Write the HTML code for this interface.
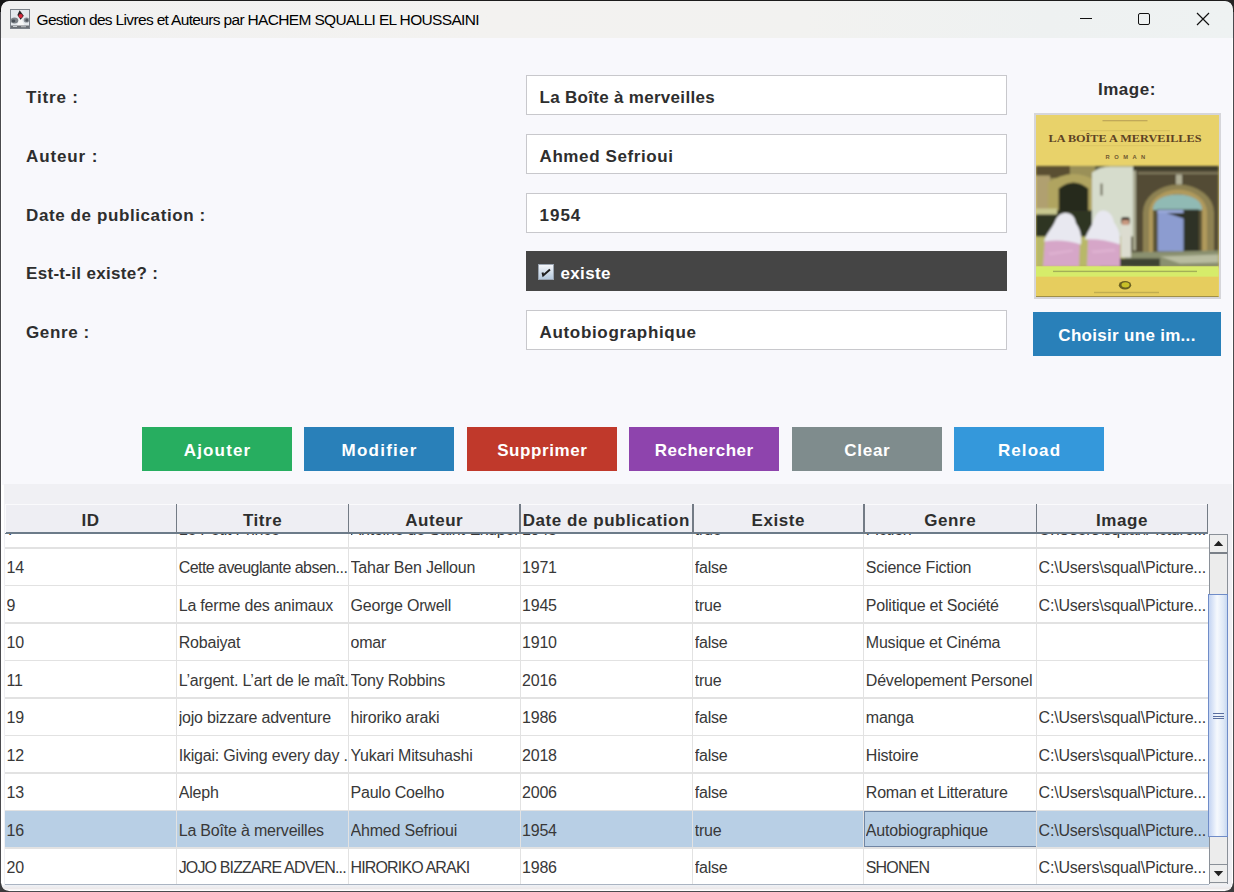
<!DOCTYPE html><html><head><meta charset="utf-8"><style>
*{margin:0;padding:0;box-sizing:border-box}
html,body{width:1234px;height:892px;overflow:hidden;background:#4a4a4e;font-family:"Liberation Sans",sans-serif;position:relative}
div{position:absolute}
#win{left:1px;top:1px;width:1232px;height:890px;background:#fff;border-radius:8px;overflow:hidden}
#content{left:1.4px;top:37px;width:1229.4px;height:447px;background:#f8f8fc}
#title{left:0;top:0;width:1232px;height:37px;background:linear-gradient(90deg,#f1f1f1 0%,#f3f2f0 40%,#f2f2f0 65%,#eef1f1 85%,#eef2f2 100%)}
.ttxt{left:35.5px;top:10px;font-size:15.5px;color:#000;letter-spacing:-0.66px;white-space:nowrap;line-height:17px}
.lbl{left:26px;font-size:17px;font-weight:bold;color:#2e2e2e;letter-spacing:0.6px;white-space:nowrap;line-height:20px}
.fld{left:526px;width:481px;height:40px;background:#fff;border:1px solid #c8c8cc}
.fld div{left:12.5px;top:12px;font-size:17px;font-weight:bold;color:#2e2e2e;letter-spacing:0.3px;white-space:nowrap;line-height:20px}
.btn{top:427px;width:150px;height:44px;color:#fff;font-weight:bold;font-size:17px;text-align:center;line-height:48px;letter-spacing:0.7px;white-space:nowrap}
#tpanel{left:4px;top:484px;width:1227.5px;height:401px;background:#f0f0f4}
.hd{top:504px;height:30px;background:#eeeef3;border-top:1px solid #fafafc;font-size:17px;font-weight:bold;color:#2e2e2e;text-align:center;line-height:31px;letter-spacing:0.55px;white-space:nowrap}
.hdv{top:504px;width:1.5px;height:29px;background:#737b85}
.cell{font-size:16px;color:#383838;white-space:nowrap;line-height:20px;overflow:hidden;letter-spacing:-0.2px}
.gv{width:1px;background:#e2e2e2}
.gh{height:1.5px;background:#e2e2e2}
</style></head><body>
<div style="left:0;top:0;width:12px;height:12px;background:#111"></div>
<div style="left:1222px;top:0;width:12px;height:12px;background:#222"></div>
<div id="win">
<div id="title"><div class="ttxt">Gestion des Livres et Auteurs par HACHEM SQUALLI EL HOUSSAINI</div></div>
<div id="content"></div>
</div>
<div style="left:0;top:0;width:1234px;height:1px;background:#1c1c1c"></div>
<svg style="position:absolute;left:10px;top:9px" width="20" height="20" viewBox="0 0 20 20"><rect x="0.5" y="0.5" width="19" height="19" fill="#e4e8ec" stroke="#7c828a" stroke-width="1"/><ellipse cx="4.5" cy="11.5" rx="3.8" ry="3" fill="#7c8288"/><ellipse cx="3.5" cy="12" rx="1.8" ry="1.4" fill="#4a5058"/><ellipse cx="16.5" cy="11" rx="2.8" ry="2.6" fill="#8a9096"/><ellipse cx="16.8" cy="11.2" rx="1.4" ry="1.6" fill="#50565e"/><path d="M6.5 17.5 L10.5 8 L15 17.5 Z" fill="#f6f6f6"/><path d="M9.6 1.3 L13.8 6.8 L10.6 10.8 L7.4 6 Z" fill="#2c2426"/><circle cx="10.6" cy="7" r="2.1" fill="#d8283c"/><rect x="1" y="16.5" width="18" height="2.5" fill="#6a6e74"/><rect x="3" y="17" width="4" height="1" fill="#c8ccd0"/><rect x="11" y="17.2" width="5" height="1" fill="#b8bcc0"/></svg>
<div style="left:1080px;top:18px;width:12px;height:1.2px;background:#111"></div>
<div style="left:1138px;top:13px;width:12px;height:12px;border:1.2px solid #111;border-radius:2px"></div>
<svg style="position:absolute;left:1196px;top:12px" width="14" height="14" viewBox="0 0 14 14"><path d="M1 1 L13 13 M13 1 L1 13" stroke="#111" stroke-width="1.2"/></svg>
<div class="lbl" style="top:88.00px;letter-spacing:0.83px">Titre :</div>
<div class="fld" style="top:75.00px"><div style="letter-spacing:0.3px">La Boîte à merveilles</div></div>
<div class="lbl" style="top:146.75px;letter-spacing:0.89px">Auteur :</div>
<div class="fld" style="top:133.75px"><div style="letter-spacing:0.6px">Ahmed Sefrioui</div></div>
<div class="lbl" style="top:205.50px;letter-spacing:0.6px">Date de publication :</div>
<div class="fld" style="top:192.50px"><div style="letter-spacing:1.0px">1954</div></div>
<div class="lbl" style="top:264.25px;letter-spacing:0.31px">Est-t-il existe? :</div>
<div style="left:526px;top:251.25px;width:481px;height:40px;background:#454545"></div>
<div style="left:538px;top:264.25px;width:16px;height:16px;background:linear-gradient(#f4f6fa,#b4c8dc);border:1px solid #9aa4b0"></div>
<svg style="position:absolute;left:538px;top:264.25px" width="16" height="16" viewBox="0 0 16 16"><path d="M4.5 8.5 L5.2 11.5 L12 5.5" stroke="#1e1e1e" stroke-width="2" fill="none"/></svg>
<div style="left:560.5px;top:264.25px;font-size:17px;font-weight:bold;color:#fff;letter-spacing:0.35px;line-height:20px">existe</div>
<div class="lbl" style="top:323.00px;letter-spacing:0.62px">Genre :</div>
<div class="fld" style="top:310.00px"><div style="letter-spacing:0.67px">Autobiographique</div></div>
<div style="left:1098px;top:79.5px;font-size:17px;font-weight:bold;color:#2e2e2e;letter-spacing:0.5px;line-height:20px">Image:</div>
<div style="left:1034px;top:112.5px;width:186.5px;height:186.5px;border:2px solid #d6d6da;background:#e8d26a;overflow:hidden"><svg width="182.5" height="182" viewBox="0 0 182.5 182" style="position:absolute;left:0;top:0"><defs><filter id="bl" x="-10%" y="-10%" width="120%" height="120%"><feGaussianBlur stdDeviation="1.1"/></filter><filter id="bl2"><feGaussianBlur stdDeviation="0.5"/></filter></defs><rect x="0" y="0" width="182.5" height="52" fill="#e8d26a"/><rect x="44.0" y="15.5" width="90" height="0.6" fill="#c9b358"/><rect x="44.0" y="30.5" width="90" height="0.6" fill="#d3bd5e"/><rect x="66.5" y="5.0" width="45" height="1.3" fill="#9a8048" opacity="0.5"/><text x="12.5" y="26.8" font-family="Liberation Serif" font-weight="bold" font-size="10.4" fill="#5e4224" textLength="153" lengthAdjust="spacingAndGlyphs">LA BOÎTE A MERVEILLES</text><text x="69.6" y="43.7" font-family="Liberation Sans" font-weight="bold" font-size="5.8" fill="#705830" textLength="39.6" lengthAdjust="spacing">ROMAN</text><g filter="url(#bl)"><rect x="0" y="51.1" width="182.5" height="100.4" fill="#5a5a40"/><rect x="0" y="51.1" width="59.0" height="50" fill="#9a9058"/><rect x="0" y="51.1" width="34.0" height="12" fill="#5a5030"/><rect x="0" y="60.5" width="14" height="35" fill="#b0a070"/><path d="M12.0 100.5 L12.0 67.5 Q37.0 51.5 59.0 65.5 L59.0 100.5 Z" fill="#b0a460"/><path d="M22.7 97.5 L22.7 73.5 Q37.5 61.5 52.3 73.5 L52.3 97.5 Z" fill="#262a1c"/><rect x="0" y="95.5" width="60.0" height="28" fill="#2e3424"/><rect x="0" y="93.5" width="21.0" height="6" fill="#c8c890"/><rect x="0" y="121.5" width="94.0" height="30" fill="#b8b868"/><path d="M56.0 111.5 L56.0 57.5 Q64.0 51.5 74.0 51.5 L97.0 51.5 L97.0 121.5 L56.0 121.5 Z" fill="#d6dccc"/><rect x="64.5" y="68.5" width="2" height="12" fill="#6a6a58"/><rect x="97.0" y="51.1" width="85.5" height="100.4" fill="#524c36"/><rect x="97.0" y="51.1" width="85.5" height="4" fill="#3a3a2c"/><rect x="97.0" y="55.5" width="3" height="80" fill="#a8a890"/><rect x="102.0" y="57.5" width="80" height="1.5" fill="#8a8468"/><path d="M107.0 141.5 L107.0 97.5 A35.5 28 0 0 1 178.0 97.5 L178.0 141.5 Z" fill="#8e8252"/><path d="M113.0 141.5 L113.0 97.5 A29 23 0 0 1 171.0 97.5 L171.0 141.5 Z" fill="#b09a5c"/><path d="M117.0 141.5 L117.0 95.5 A24.5 16 0 0 1 166.0 95.5 L166.0 141.5 Z" fill="#5a5236"/><path d="M117.0 95.0 L117.0 93.5 A24.5 14 0 0 1 166.0 93.5 L166.0 95.0 Z" fill="#90bab4"/><rect x="140.0" y="59.5" width="6" height="10" fill="#c8c8b0" opacity="0.8"/><rect x="121.0" y="94.5" width="42" height="42" fill="#2e3028"/><path d="M121.5 95.0 L147.6 103.5 L147.6 136.5 L121.5 136.5 Z" fill="#8c9cd0"/><rect x="121.5" y="95.0" width="26" height="3" fill="#98a8d8"/><path d="M89.0 137.5 L182.5 135.5 L182.5 151.5 L89.0 151.5 Z" fill="#8a9070"/><path d="M124.0 141.5 L182.5 139.5 L182.5 147.5 L144.0 148.5 Z" fill="#b8bca0"/><rect x="64.0" y="143.5" width="60" height="8" fill="#3e4230"/><path d="M7.0 151.5 L9.0 123.5 Q26.0 117.5 44.0 125.5 L43.0 151.5 Z" fill="#d6a6c8"/><path d="M51.0 151.5 L52.0 123.5 Q68.0 117.5 84.0 125.5 L84.0 151.5 Z" fill="#d6a6c8"/><path d="M8.0 126.5 C10.0 118.5 16.0 113.5 19.0 106.5 C21.0 100.5 25.0 98.0 30.0 98.0 C36.0 98.0 39.0 102.5 40.0 108.5 C44.0 113.5 46.0 120.5 45.0 129.5 Q27.0 123.5 8.0 126.5 Z" fill="#e8e8f0"/><path d="M49.0 124.5 C51.0 116.5 56.0 111.5 58.0 104.5 C60.0 98.5 63.0 95.5 67.0 95.5 C73.0 95.5 77.0 100.5 78.0 107.5 C82.0 112.5 85.0 119.5 84.0 129.5 Q66.0 123.5 49.0 124.5 Z" fill="#e8e8f0"/><path d="M12.0 137.5 L36.0 134.5 L38.0 136.5 L14.0 140.5 Z" fill="#e2b8d6" opacity="0.6"/><path d="M55.0 135.5 L78.0 133.5 L80.0 136.5 L57.0 138.5 Z" fill="#e2b8d6" opacity="0.6"/><rect x="85.0" y="109.5" width="10" height="33" fill="#dcdcd0"/><rect x="85.0" y="102.0" width="9" height="7.5" rx="3" fill="#3a2e28"/><rect x="86.0" y="105.0" width="7" height="5" fill="#c89880"/></g><rect x="0" y="151.3" width="182.5" height="10.5" fill="#d6ec6a"/><rect x="0" y="161.8" width="182.5" height="20.5" fill="#e6cd5e"/><rect x="17.0" y="155.7" width="144" height="1.4" fill="#7a8048" opacity="0.55"/><ellipse cx="89.0" cy="170.3" rx="6.2" ry="4.2" fill="#6a6020"/><ellipse cx="89.5" cy="169.8" rx="4" ry="2.6" fill="#c8c028"/><rect x="58.0" y="176.8" width="65" height="1.4" fill="#a89848" opacity="0.6"/><rect x="0" y="181.5" width="182.5" height="0.8" fill="#5a5030"/></svg></div>
<div class="btn" style="left:1033px;top:312px;width:188px;background:#2980b9;letter-spacing:0.3px">Choisir une im...</div>
<div class="btn" style="left:142px;background:#27ae60;letter-spacing:1.13px;text-indent:1.13px">Ajouter</div>
<div class="btn" style="left:304px;background:#2980b9;letter-spacing:1.24px;text-indent:1.24px">Modifier</div>
<div class="btn" style="left:467px;background:#c0392b;letter-spacing:0.59px;text-indent:0.59px">Supprimer</div>
<div class="btn" style="left:629px;background:#8e44ad;letter-spacing:0.54px;text-indent:0.54px">Rechercher</div>
<div class="btn" style="left:792px;background:#7f8c8d;letter-spacing:0.7px;text-indent:0.7px">Clear</div>
<div class="btn" style="left:954px;background:#3498db;letter-spacing:1.08px;text-indent:1.08px">Reload</div>
<div id="tpanel"></div>
<div style="left:4.5px;top:533px;width:1204px;height:352px;background:#fff"></div>
<div style="left:4.5px;top:533px;width:1204px;height:352px;overflow:hidden">
<div class="cell" style="left:2.0px;top:-12.60px;width:169.7px">7</div>
<div class="cell" style="left:174.2px;top:-12.60px;width:169.3px">Le Petit Prince</div>
<div class="cell" style="left:346.0px;top:-12.60px;width:169.0px">Antoine de Saint-Exupéri</div>
<div class="cell" style="left:517.5px;top:-12.60px;width:170.2px">1943</div>
<div class="cell" style="left:690.2px;top:-12.60px;width:168.6px">true</div>
<div class="cell" style="left:861.3px;top:-12.60px;width:170.3px">Fiction</div>
<div class="cell" style="left:1034.1px;top:-12.60px;width:168.4px">C:\Users\squal\Picture...</div>
<div class="gh" style="left:0;top:14.25px;width:1204px"></div>
<div class="cell" style="left:2.0px;top:25.20px;width:169.7px">14</div>
<div class="cell" style="left:174.2px;top:25.20px;width:169.3px;letter-spacing:-0.55px">Cette aveuglante absen...</div>
<div class="cell" style="left:346.0px;top:25.20px;width:169.0px">Tahar Ben Jelloun</div>
<div class="cell" style="left:517.5px;top:25.20px;width:170.2px">1971</div>
<div class="cell" style="left:690.2px;top:25.20px;width:168.6px">false</div>
<div class="cell" style="left:861.3px;top:25.20px;width:170.3px">Science Fiction</div>
<div class="cell" style="left:1034.1px;top:25.20px;width:168.4px">C:\Users\squal\Picture...</div>
<div class="gh" style="left:0;top:51.75px;width:1204px"></div>
<div class="cell" style="left:2.0px;top:62.70px;width:169.7px">9</div>
<div class="cell" style="left:174.2px;top:62.70px;width:169.3px">La ferme des animaux</div>
<div class="cell" style="left:346.0px;top:62.70px;width:169.0px">George Orwell</div>
<div class="cell" style="left:517.5px;top:62.70px;width:170.2px">1945</div>
<div class="cell" style="left:690.2px;top:62.70px;width:168.6px">true</div>
<div class="cell" style="left:861.3px;top:62.70px;width:170.3px">Politique et Société</div>
<div class="cell" style="left:1034.1px;top:62.70px;width:168.4px">C:\Users\squal\Picture...</div>
<div class="gh" style="left:0;top:89.25px;width:1204px"></div>
<div class="cell" style="left:2.0px;top:100.20px;width:169.7px">10</div>
<div class="cell" style="left:174.2px;top:100.20px;width:169.3px">Robaiyat</div>
<div class="cell" style="left:346.0px;top:100.20px;width:169.0px">omar</div>
<div class="cell" style="left:517.5px;top:100.20px;width:170.2px">1910</div>
<div class="cell" style="left:690.2px;top:100.20px;width:168.6px">false</div>
<div class="cell" style="left:861.3px;top:100.20px;width:170.3px">Musique et Cinéma</div>
<div class="cell" style="left:1034.1px;top:100.20px;width:168.4px"></div>
<div class="gh" style="left:0;top:126.75px;width:1204px"></div>
<div class="cell" style="left:2.0px;top:137.70px;width:169.7px">11</div>
<div class="cell" style="left:174.2px;top:137.70px;width:169.3px">L’argent. L’art de le maît.</div>
<div class="cell" style="left:346.0px;top:137.70px;width:169.0px">Tony Robbins</div>
<div class="cell" style="left:517.5px;top:137.70px;width:170.2px">2016</div>
<div class="cell" style="left:690.2px;top:137.70px;width:168.6px">true</div>
<div class="cell" style="left:861.3px;top:137.70px;width:170.3px">Dévelopement Personel</div>
<div class="cell" style="left:1034.1px;top:137.70px;width:168.4px"></div>
<div class="gh" style="left:0;top:164.25px;width:1204px"></div>
<div class="cell" style="left:2.0px;top:175.20px;width:169.7px">19</div>
<div class="cell" style="left:174.2px;top:175.20px;width:169.3px">jojo bizzare adventure</div>
<div class="cell" style="left:346.0px;top:175.20px;width:169.0px">hiroriko araki</div>
<div class="cell" style="left:517.5px;top:175.20px;width:170.2px">1986</div>
<div class="cell" style="left:690.2px;top:175.20px;width:168.6px">false</div>
<div class="cell" style="left:861.3px;top:175.20px;width:170.3px">manga</div>
<div class="cell" style="left:1034.1px;top:175.20px;width:168.4px">C:\Users\squal\Picture...</div>
<div class="gh" style="left:0;top:201.75px;width:1204px"></div>
<div class="cell" style="left:2.0px;top:212.70px;width:169.7px">12</div>
<div class="cell" style="left:174.2px;top:212.70px;width:169.3px">Ikigai: Giving every day ..</div>
<div class="cell" style="left:346.0px;top:212.70px;width:169.0px">Yukari Mitsuhashi</div>
<div class="cell" style="left:517.5px;top:212.70px;width:170.2px">2018</div>
<div class="cell" style="left:690.2px;top:212.70px;width:168.6px">false</div>
<div class="cell" style="left:861.3px;top:212.70px;width:170.3px">Histoire</div>
<div class="cell" style="left:1034.1px;top:212.70px;width:168.4px">C:\Users\squal\Picture...</div>
<div class="gh" style="left:0;top:239.25px;width:1204px"></div>
<div class="cell" style="left:2.0px;top:250.20px;width:169.7px">13</div>
<div class="cell" style="left:174.2px;top:250.20px;width:169.3px">Aleph</div>
<div class="cell" style="left:346.0px;top:250.20px;width:169.0px">Paulo Coelho</div>
<div class="cell" style="left:517.5px;top:250.20px;width:170.2px">2006</div>
<div class="cell" style="left:690.2px;top:250.20px;width:168.6px">false</div>
<div class="cell" style="left:861.3px;top:250.20px;width:170.3px">Roman et Litterature</div>
<div class="cell" style="left:1034.1px;top:250.20px;width:168.4px">C:\Users\squal\Picture...</div>
<div class="gh" style="left:0;top:276.75px;width:1204px"></div>
<div style="left:0;top:278.00px;width:1204px;height:36.5px;background:#b8cfe5"></div>
<div style="left:859.8px;top:278.30px;width:172.3px;height:35.5px;border:1.2px solid #7086a4"></div>
<div class="cell" style="left:2.0px;top:287.70px;width:169.7px">16</div>
<div class="cell" style="left:174.2px;top:287.70px;width:169.3px">La Boîte à merveilles</div>
<div class="cell" style="left:346.0px;top:287.70px;width:169.0px">Ahmed Sefrioui</div>
<div class="cell" style="left:517.5px;top:287.70px;width:170.2px">1954</div>
<div class="cell" style="left:690.2px;top:287.70px;width:168.6px">true</div>
<div class="cell" style="left:861.3px;top:287.70px;width:170.3px">Autobiographique</div>
<div class="cell" style="left:1034.1px;top:287.70px;width:168.4px">C:\Users\squal\Picture...</div>
<div class="gh" style="left:0;top:314.25px;width:1204px"></div>
<div class="cell" style="left:2.0px;top:325.20px;width:169.7px">20</div>
<div class="cell" style="left:174.2px;top:325.20px;width:169.3px;letter-spacing:-0.85px">JOJO BIZZARE ADVEN...</div>
<div class="cell" style="left:346.0px;top:325.20px;width:169.0px;letter-spacing:-0.85px">HIRORIKO ARAKI</div>
<div class="cell" style="left:517.5px;top:325.20px;width:170.2px">1986</div>
<div class="cell" style="left:690.2px;top:325.20px;width:168.6px">false</div>
<div class="cell" style="left:861.3px;top:325.20px;width:170.3px;letter-spacing:-0.85px">SHONEN</div>
<div class="cell" style="left:1034.1px;top:325.20px;width:168.4px">C:\Users\squal\Picture...</div>
<div class="gh" style="left:0;top:351.75px;width:1204px"></div>
<div class="gv" style="left:171.7px;top:0;height:352px"></div>
<div class="gv" style="left:343.5px;top:0;height:352px"></div>
<div class="gv" style="left:515.0px;top:0;height:352px"></div>
<div class="gv" style="left:687.7px;top:0;height:352px"></div>
<div class="gv" style="left:858.8px;top:0;height:352px"></div>
<div class="gv" style="left:1031.6px;top:0;height:352px"></div>
</div>
<div style="left:4.5px;top:884px;width:1204px;height:1.2px;background:#aab4c2"></div>
<div style="left:2px;top:885.2px;width:1229px;height:5px;background:linear-gradient(#eef1f6,#ece9ea 70%,#fbfafa)"></div>
<div class="hd" style="left:4.5px;width:172.2px">ID</div>
<div class="hd" style="left:176.7px;width:171.8px">Titre</div>
<div class="hd" style="left:348.5px;width:171.5px">Auteur</div>
<div class="hd" style="left:520.0px;width:172.7px">Date de publication</div>
<div class="hd" style="left:692.7px;width:171.1px">Existe</div>
<div class="hd" style="left:863.8px;width:172.8px">Genre</div>
<div class="hd" style="left:1036.6px;width:170.9px">Image</div>
<div style="left:4.5px;top:532.2px;width:1203px;height:1.8px;background:#6c7b89"></div>
<div style="left:4.5px;top:504px;width:1px;height:29px;background:#fafafc"></div>
<div class="hdv" style="left:175.9px"></div>
<div class="hdv" style="left:347.8px"></div>
<div class="hdv" style="left:519.2px"></div>
<div class="hdv" style="left:692.0px"></div>
<div class="hdv" style="left:863.0px"></div>
<div class="hdv" style="left:1035.8px"></div>
<div class="hdv" style="left:1206.8px"></div>
<div style="left:1208.8px;top:534px;width:19.0px;height:350px;background:#ececec;border-left:1.2px solid #8a9098;border-right:1.2px solid #8a9098"></div>
<div style="left:1209.8px;top:534px;width:17.0px;height:19px;background:#eeeeee;border-top:1.2px solid #8a9098"></div>
<div style="left:1209.8px;top:552px;width:17.0px;height:1.6px;background:#7a8088"></div>
<svg style="position:absolute;left:1213px;top:540px" width="11" height="7" viewBox="0 0 11 7"><path d="M0.8 6 L5.5 0.8 L10.2 6 Z" fill="#222"/></svg>
<div style="left:1208.4px;top:594.3px;width:19.4px;height:242.5px;border:1.3px solid #6f8cc8;background:linear-gradient(90deg,#c4d4f2 0%,#f6f9fd 45%,#dfe8f6 80%,#c8d8f0 100%)"></div>
<div style="left:1213.2px;top:713.0px;width:10.8px;height:1.3px;background:#5a6ea0"></div>
<div style="left:1213.2px;top:715.6px;width:10.8px;height:1.3px;background:#5a6ea0"></div>
<div style="left:1213.2px;top:718.2px;width:10.8px;height:1.3px;background:#5a6ea0"></div>
<div style="left:1209.8px;top:864px;width:17.0px;height:19px;background:#eeeeee;border-top:1.3px solid #8a9098;border-bottom:1.3px solid #8a9098"></div>
<svg style="position:absolute;left:1213px;top:870px" width="11" height="7" viewBox="0 0 11 7"><path d="M0.8 1 L5.5 6.2 L10.2 1 Z" fill="#222"/></svg>
<svg style="position:absolute;left:0;top:0" width="1234" height="892" viewBox="0 0 1234 892"><path d="M0 0 L9 0 L9 1 A8 8 0 0 0 1 9 L0 9 Z" fill="#151515"/><path d="M1234 0 L1225 0 L1225 1 A8 8 0 0 1 1233 9 L1234 9 Z" fill="#252525"/><path d="M0 892 L9 892 L9 891 A8 8 0 0 1 1 883 L0 883 Z" fill="#3a3a3c"/><path d="M1234 892 L1225 892 L1225 891 A8 8 0 0 0 1233 883 L1234 883 Z" fill="#3a3a3c"/></svg>
</body></html>
